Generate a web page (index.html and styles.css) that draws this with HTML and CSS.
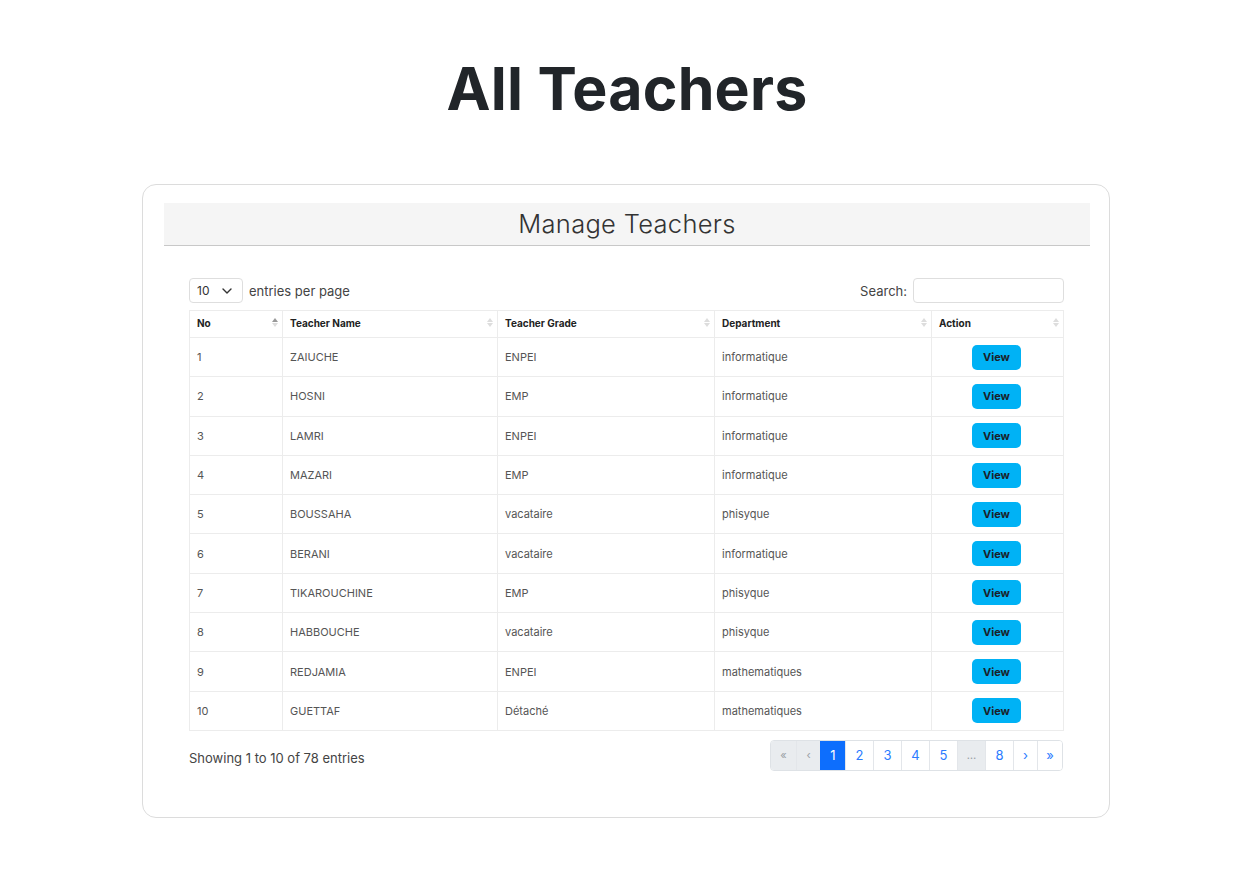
FILE: index.html
```html
<!DOCTYPE html>
<html lang="en">
<head>
<meta charset="utf-8">
<title>All Teachers</title>
<link rel="stylesheet" href="styles.css">
</head>
<body>
<h1 class="page-title">All Teachers</h1>
<div class="card">
  <div class="card-header">Manage Teachers</div>
  <div class="card-body">
    <div class="controls">
      <div class="length">
        <div class="select"><span>10</span>
          <svg width="10" height="6" viewBox="0 0 10 6"><path d="M1 1l4 4 4-4" fill="none" stroke="#333" stroke-width="1.4" stroke-linecap="round" stroke-linejoin="round"/></svg>
        </div>
        <span class="length-label">entries per page</span>
      </div>
      <label class="search">Search: <span class="search-input"></span></label>
    </div>
    <table class="data">
      <thead>
        <tr>
          <th class="c1"><div class="th-in">No<span class="sort asc"><i class="up"></i><i class="down"></i></span></div></th>
          <th class="c2"><div class="th-in">Teacher Name<span class="sort"><i class="up"></i><i class="down"></i></span></div></th>
          <th class="c3"><div class="th-in">Teacher Grade<span class="sort"><i class="up"></i><i class="down"></i></span></div></th>
          <th class="c4"><div class="th-in">Department<span class="sort"><i class="up"></i><i class="down"></i></span></div></th>
          <th class="c5"><div class="th-in">Action<span class="sort"><i class="up"></i><i class="down"></i></span></div></th>
        </tr>
      </thead>
      <tbody>
        <tr><td>1</td><td>ZAIUCHE</td><td>ENPEI</td><td>informatique</td><td class="act"><button class="btn-view">View</button></td></tr>
        <tr><td>2</td><td>HOSNI</td><td>EMP</td><td>informatique</td><td class="act"><button class="btn-view">View</button></td></tr>
        <tr><td>3</td><td>LAMRI</td><td>ENPEI</td><td>informatique</td><td class="act"><button class="btn-view">View</button></td></tr>
        <tr><td>4</td><td>MAZARI</td><td>EMP</td><td>informatique</td><td class="act"><button class="btn-view">View</button></td></tr>
        <tr><td>5</td><td>BOUSSAHA</td><td>vacataire</td><td>phisyque</td><td class="act"><button class="btn-view">View</button></td></tr>
        <tr><td>6</td><td>BERANI</td><td>vacataire</td><td>informatique</td><td class="act"><button class="btn-view">View</button></td></tr>
        <tr><td>7</td><td>TIKAROUCHINE</td><td>EMP</td><td>phisyque</td><td class="act"><button class="btn-view">View</button></td></tr>
        <tr><td>8</td><td>HABBOUCHE</td><td>vacataire</td><td>phisyque</td><td class="act"><button class="btn-view">View</button></td></tr>
        <tr><td>9</td><td>REDJAMIA</td><td>ENPEI</td><td>mathematiques</td><td class="act"><button class="btn-view">View</button></td></tr>
        <tr><td>10</td><td>GUETTAF</td><td>Détaché</td><td>mathematiques</td><td class="act"><button class="btn-view">View</button></td></tr>
      </tbody>
    </table>
    <div class="footer">
      <div class="info">Showing 1 to 10 of 78 entries</div>
      <ul class="pagination">
        <li class="pg w25 disabled">«</li>
        <li class="pg w24 disabled">‹</li>
        <li class="pg w25 active">1</li>
        <li class="pg w28">2</li>
        <li class="pg w28">3</li>
        <li class="pg w28">4</li>
        <li class="pg w28">5</li>
        <li class="pg w28 disabled">…</li>
        <li class="pg w28">8</li>
        <li class="pg w24">›</li>
        <li class="pg w25">»</li>
      </ul>
    </div>
  </div>
</div>
</body>
</html>
```
FILE: styles.css
```css
* { box-sizing: border-box; }
body {
  margin: 0;
  background: #fff;
  font-family: Inter, "Open Sans", "Liberation Sans", sans-serif;
  color: #212529;
}
.page-title {
  margin: 0;
  padding-top: 53px;
  height: 184px;
  text-align: center;
  font-size: 59px;
  font-weight: 700;
  line-height: 72px;
  letter-spacing: 0.2px;
  color: #212529;
  padding-left: 6px;
}
.card {
  width: 968px;
  margin-left: 142px;
  border: 1px solid #dcdcdc;
  border-radius: 14px;
  padding: 18px 19px 46px 21px;
}
.card-header {
  height: 43px;
  background: #f5f5f5;
  border-bottom: 1px solid #c8c8c8;
  text-align: center;
  font-size: 25.5px;
  font-weight: 300;
  line-height: 42px;
  letter-spacing: 0.3px;
  color: #333;
}
.card-body {
  padding: 32px 26px 0 25px;
}
.controls {
  display: flex;
  justify-content: space-between;
  align-items: center;
  height: 25px;
}
.length { display: flex; align-items: center; gap: 6px; }
.select {
  width: 54px;
  height: 25px;
  border: 1px solid #dedede;
  border-radius: 4px;
  display: flex;
  align-items: center;
  justify-content: space-between;
  padding: 0 10px 0 7px;
  font-size: 12px;
  color: #333;
}
.length-label, .search { font-size: 13px; color: #444; }
.search { display: flex; align-items: center; gap: 6px; }
.search-input {
  width: 151px;
  height: 25px;
  border: 1px solid #dedede;
  border-radius: 4px;
}
.data {
  margin-top: 7px;
  width: 874px;
  border-collapse: collapse;
  table-layout: fixed;
  border: 1px solid #e6e6e6;
}
.c1 { width: 93px; }
.c2 { width: 215px; }
.c3 { width: 217px; }
.c4 { width: 217px; }
.c5 { width: 132px; }
th, td {
  border: 1px solid #ececec;
  text-align: left;
  padding: 0 7px;
}
th {
  height: 27px;
  font-size: 10px;
  font-weight: 700;
  color: #222;
  padding-bottom: 3px;
}
.th-in { display: flex; justify-content: space-between; align-items: center; }
.sort { display: flex; flex-direction: column; gap: 1px; margin-right: -3px; }
.sort i { display: block; width: 0; height: 0; border-left: 3px solid transparent; border-right: 3px solid transparent; }
.sort .up { border-bottom: 4px solid #ddd; }
.sort .down { border-top: 4px solid #ddd; }
.sort.asc .up { border-bottom-color: #999; }
td {
  height: 39.3px;
  font-size: 11px;
  color: #555;
}
td.act { text-align: center; padding: 0; }
.btn-view {
  width: 49px;
  height: 25px;
  border: none;
  border-radius: 5px;
  background: #00b2f5;
  color: #1b1f2a;
  font-family: inherit;
  font-size: 11px;
  font-weight: 700;
  padding: 0;
  margin-left: -2px;
}
.footer {
  display: flex;
  justify-content: space-between;
  align-items: center;
  margin-top: 9px;
  width: 874px;
}
.info { font-size: 13px; color: #444; padding-top: 5px; }
.pagination {
  display: flex;
  list-style: none;
  margin: 0;
  padding: 0;
  border: 1px solid #dee2e6;
  border-radius: 4px;
  overflow: hidden;
  height: 31px;
}
.pg {
  display: flex;
  align-items: center;
  justify-content: center;
  font-size: 13px;
  color: #2b7bff;
  background: #fff;
  border-left: 1px solid #e3e6ea;
}
.pg:first-child { border-left: none; }
.pg.disabled { background: #e9ecef; color: #9aa0a6; font-size: 11px; }
.pg.active { background: #0d6efd; color: #fff; border-left-color: #0d6efd; }
.w24 { width: 24px; }
.w25 { width: 25px; }
.w28 { width: 28px; }
```
